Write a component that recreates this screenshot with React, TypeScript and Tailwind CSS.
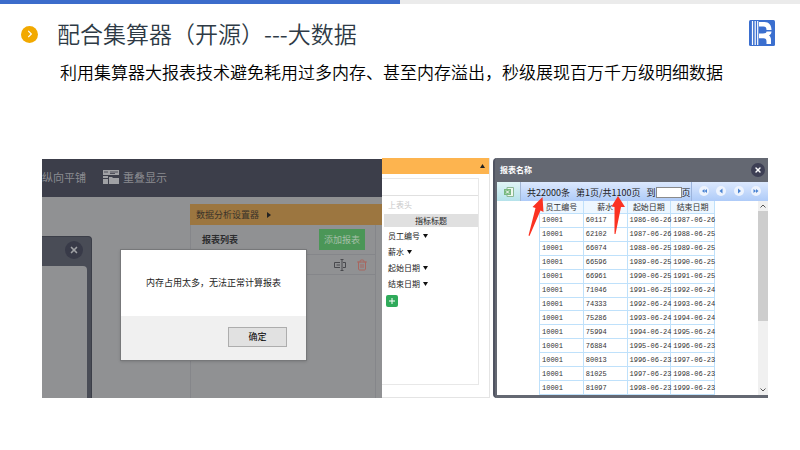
import { FaChevronRight } from 'react-icons/fa'
import { LuTrash2, LuX } from 'react-icons/lu'

const rows = [
    ["10001", "60117", "1986-06-26", "1987-06-26"],
    ["10001", "62102", "1987-06-26", "1988-06-25"],
    ["10001", "66074", "1988-06-25", "1989-06-25"],
    ["10001", "66596", "1989-06-25", "1990-06-25"],
    ["10001", "66961", "1990-06-25", "1991-06-25"],
    ["10001", "71046", "1991-06-25", "1992-06-24"],
    ["10001", "74333", "1992-06-24", "1993-06-24"],
    ["10001", "75286", "1993-06-24", "1994-06-24"],
    ["10001", "75994", "1994-06-24", "1995-06-24"],
    ["10001", "76884", "1995-06-24", "1996-06-23"],
    ["10001", "80013", "1996-06-23", "1997-06-23"],
    ["10001", "81025", "1997-06-23", "1998-06-23"],
    ["10001", "81097", "1998-06-23", "1999-06-23"],
]

const columns = ["员工编号", "薪水", "起始日期", "结束日期"]

const pagers = [
    { label: "首页", d: "M5.5 3 L3 5 L5.5 7 Z M8 3 L5.5 5 L8 7 Z" },
    { label: "上一页", d: "M6.5 2.5 L3.5 5 L6.5 7.5 Z" },
    { label: "下一页", d: "M4 2.5 L7 5 L4 7.5 Z" },
    { label: "末页", d: "M2.5 3 L5 5 L2.5 7 Z M5 3 L7.5 5 L5 7 Z" },
]

function Logo() {
    return (
        <svg viewBox="0 0 26 26" className="size-[26px]" aria-hidden="true">
            <rect width="26" height="26" rx="1.5" fill="#3b6fcf" />
            <path d="M3.500 1V25M6.200 1V25M8.700 1V25" stroke="#fff" strokeWidth="1.200" />
            <path d="M10 2H15.500C20 2 22.500 5 22.500 10H17.500C17.500 7.500 16.500 6.500 14.500 6.500H10Z" fill="#fff" />
            <path d="M10 13.500H14C16.500 13.500 17.500 12.500 17.500 11.500H22.500C22.500 13.500 21.500 14.500 20 15.500C21.500 16.500 22 18 22 20V24H17.500V21.500C17.500 19.500 16.500 18.300 14.500 18.300H10Z" fill="#fff" />
        </svg>
    )
}

function AlertFigure() {
    return (
        <section className="relative flex flex-col mt-px bg-[#909193] overflow-hidden">
            <div className="flex items-center h-[38px] pb-0.5 bg-[#3c3e4a] text-[11px] text-[#8b8c91]">
                <span>纵向平铺</span>
                <svg viewBox="0 0 16 14" className="w-4 h-3.5 ml-[17px] mr-1" fill="#a0a1a5" aria-hidden="true">
                    <path d="M0 0H16V5H0Z M0 6H5V8H0Z M0 9H5V14H0Z M6 7H9L10 8H16V14H6Z" />
                    <path d="M1 2H5M7 2H15M7 3.500H12" stroke="#3c3e4a" strokeWidth="0.800" />
                </svg>
                <span>重叠显示</span>
            </div>
            <div className="flex flex-1 justify-between">
                <div className="flex flex-col w-[50px] mt-[39px] rounded-tr bg-[#494c56] border-t border-r border-[#3b3e48] pr-1">
                    <div className="flex items-center justify-end h-[29px] pr-1">
                        <button aria-label="关闭" className="flex items-center justify-center size-[18px] mb-1 rounded-full bg-[#383a48] text-[#a0a1a5]">
                            <LuX className="size-2.5" strokeWidth={4} />
                        </button>
                    </div>
                    <div className="flex-1 rounded-tr-sm bg-[#909193]" />
                </div>
                <div className="flex flex-col w-48 mt-[7px]">
                    <div className="flex items-center h-[21px] px-1.5 gap-2 bg-[#9c7640] text-[9px] text-[#3a332a]">
                        <span>数据分析设置器</span>
                        <svg viewBox="0 0 4 6" className="w-1 h-1.5" fill="#222" aria-hidden="true"><path d="M0 0L4 3L0 6Z" /></svg>
                    </div>
                    <div className="flex flex-col flex-1 mr-1.5 border-x border-[#85868a]">
                        <div className="flex items-center justify-between h-[30px] pl-[11px] pr-2.5 border-b border-[#85868a]">
                            <span className="text-[9px] font-bold text-[#2b2b2d]">报表列表</span>
                            <button className="h-[21px] px-[5px] bg-[#4b9657] text-[9px] text-[#a5bfa8]">添加报表</button>
                        </div>
                        <div className="flex items-center justify-end h-5 gap-2.5 pr-[7px] border-b border-[#85868a]">
                            <button aria-label="重命名">
                                <svg viewBox="0 0 12 12" className="size-3" fill="none" stroke="#48494d" aria-hidden="true">
                                    <path d="M6 3.500H0.500V8.500H6M2.500 6H6M8 0.500V11.500M6.500 0.500H9.500M6.500 11.500H9.500M9 3.500H11.500V8.500H9" />
                                </svg>
                            </button>
                            <button aria-label="删除"><LuTrash2 className="size-3 text-[#a8665f]" /></button>
                        </div>
                    </div>
                </div>
            </div>
            <div role="alertdialog" aria-label="提示" className="absolute left-[78px] top-[90px] w-[187px] bg-white border border-[#77787a] shadow-sm">
                <p className="h-[66px] pt-[25px] text-center text-[9px] leading-4 text-[#222]">内存占用太多，无法正常计算报表</p>
                <div className="flex justify-end h-11 pt-[11px] pr-[19px] bg-[#f0f0f0]">
                    <button className="w-[59px] h-5 bg-[#e1e1e1] border border-[#adadad] text-[9px] leading-4 text-black">确定</button>
                </div>
            </div>
        </section>
    )
}

function FieldFigure() {
    return (
        <section className="flex flex-col mr-0.5 border-r border-b border-[#e4e4e4] text-[8px] text-[#222]">
            <div className="flex items-center justify-end h-4 pr-1 bg-[#fdb44f]">
                <svg viewBox="0 0 5 4" className="w-[5px] h-1" fill="#222" aria-hidden="true"><path d="M0 4L2.500 0L5 4Z" /></svg>
            </div>
            <div className="flex flex-col flex-1 mt-1 mr-2.5 mb-3 border-y border-r border-[#e8e8e8]">
                <div className="h-[17px] border-b border-[#e0e0e0]" />
                <div className="h-[18px] pl-1.5 leading-[18px] text-[#c8c8c8]">上表头</div>
                <div className="h-[13px] ml-0.5 bg-[#e0e0e0] text-center leading-[13px]">指标标题</div>
                <div className="flex flex-col items-start pl-1.5 pt-px">
                    {columns.map((name) => (
                        <button key={name} className="flex items-center gap-[3px] h-4 leading-4">
                            {name}
                            <svg viewBox="0 0 5 4" className="w-[5px] h-1" fill="#111" aria-hidden="true"><path d="M0 0H5L2.500 4Z" /></svg>
                        </button>
                    ))}
                </div>
                <button aria-label="添加" className="size-3 ml-1 mt-[3px] rounded-xs bg-[#2faa5a]">
                    <svg viewBox="0 0 12 12" stroke="#fff" aria-hidden="true"><path d="M6 3V9M3 6H9" /></svg>
                </button>
            </div>
        </section>
    )
}

function ReportFigure() {
    return (
        <section className="relative flex flex-col ml-px rounded-l bg-[#646872] border-l-2 border-[#505462] pl-0.5 pb-[3px]">
            <div className="flex items-center justify-between h-6 px-[3px] text-white">
                <h2 className="text-[8px] font-bold">报表名称</h2>
                <button aria-label="关闭" className="flex items-center justify-center size-3.5 rounded-full bg-[#3d3f54]">
                    <LuX className="size-2" strokeWidth={4} />
                </button>
            </div>
            <div className="flex h-[19px] bg-linear-to-b from-[#dce8fd] to-[#aecbf8] text-[#222]">
                <button aria-label="导出Excel" className="flex items-center justify-center w-6 bg-linear-to-b from-[#e0f4f5] to-[#b5e2ea] border-r border-[#a3b7d6]">
                    <svg viewBox="0 0 10 10" className="size-2.5" aria-hidden="true">
                        <path d="M3 0.500H9.500V9.500H3Z" fill="#eef7ee" stroke="#8bb894" />
                        <path d="M0 2H7V8H0Z" fill="#79b97f" />
                        <path d="M2 3.500L5 6.500M5 3.500L2 6.500" stroke="#fff" />
                    </svg>
                </button>
                <div className="flex items-center flex-1 pl-1.5 pt-0.5 text-[9px] whitespace-nowrap border-r border-[#9db4dc]">
                    <span>共22000条</span>
                    <span className="ml-1.5">第1页/共1100页</span>
                    <label htmlFor="page" className="ml-1.5">到</label>
                    <input id="page" className="w-[26px] h-[11px] bg-white border border-[#8a8a8a]" />
                    <span>页</span>
                </div>
                <div className="flex items-center justify-between w-[76px] px-[7px] pb-0.5">
                    {pagers.map((p) => (
                        <button key={p.label} aria-label={p.label} className="size-2.5 rounded-full bg-[#edf3fd]">
                            <svg viewBox="0 0 10 10" fill="#4a83d2" aria-hidden="true"><path d={p.d} /></svg>
                        </button>
                    ))}
                </div>
            </div>
            <div className="flex flex-1 bg-white">
                <div className="flex-1 pl-[42px]">
                    <table className="w-44 h-full table-fixed border-collapse text-[#333]">
                        <thead>
                            <tr className="bg-[#eef7ff] text-[8px] leading-3">
                                {columns.map((name) => (
                                    <th key={name} className="p-0 font-normal border-x border-b border-[#bfe1fb]">{name}</th>
                                ))}
                            </tr>
                        </thead>
                        <tbody className="font-['Liberation_Mono',monospace] text-[7px] leading-3">
                            {rows.map((row) => (
                                <tr key={row[1]}>
                                    {row.map((cell, i) => (
                                        <td key={i} className="p-0 pl-0.5 whitespace-nowrap border border-[#bfe1fb]">{cell}</td>
                                    ))}
                                </tr>
                            ))}
                        </tbody>
                    </table>
                </div>
                <div className="flex flex-col items-center w-2.5 bg-[#f0f0f0]">
                    <svg viewBox="0 0 10 10" className="size-2.5" fill="none" stroke="#555" aria-hidden="true"><path d="M2.500 6.500L5 4L7.500 6.500" /></svg>
                    <div className="w-full h-[110px] bg-[#cdcdcd]" />
                    <svg viewBox="0 0 10 10" className="size-2.5 mt-auto" fill="none" stroke="#555" aria-hidden="true"><path d="M2.500 3.500L5 6L7.500 3.500" /></svg>
                </div>
            </div>
            <svg viewBox="0 0 110 44" className="absolute left-[30px] top-9 w-[110px] h-11" fill="#fb3222" aria-hidden="true">
                <path d="M17.500 3L18.500 18L15.500 16.500L4.500 42L3.500 41.500L10.500 14L7.500 13Z" />
                <path d="M93 2L100 13L96 13L90.500 40L89.500 40L89.500 13L86.500 12.500Z" />
            </svg>
        </section>
    )
}

export default function App() {
    return (
        <main className="bg-white font-['Noto_Sans_CJK_SC',sans-serif]">
            <div className="flex h-1">
                <div className="flex-1 bg-[#3c6ccb]" />
                <div className="flex-1 bg-[#ebebeb]" />
            </div>
            <header className="flex items-center pl-[21px] pr-[25px] pt-[11px]">
                <span className="flex items-center justify-center size-[17px] mt-0.5 rounded-full bg-[#f2a900] text-white">
                    <FaChevronRight className="size-2" />
                </span>
                <h1 className="flex-1 ml-[19px] text-[23px] leading-9 font-[350] text-[#2e3a45]">配合集算器（开源）---大数据</h1>
                <Logo />
            </header>
            <p className="pl-[60px] pt-[7px] text-[17px] leading-7 font-[350] text-black">利用集算器大报表技术避免耗用过多内存、甚至内存溢出，秒级展现百万千万级明细数据</p>
            <div className="grid grid-cols-[340fr_110fr_276fr] h-60 mt-[72px] ml-[42px] mr-8">
                <AlertFigure />
                <FieldFigure />
                <ReportFigure />
            </div>
        </main>
    )
}
